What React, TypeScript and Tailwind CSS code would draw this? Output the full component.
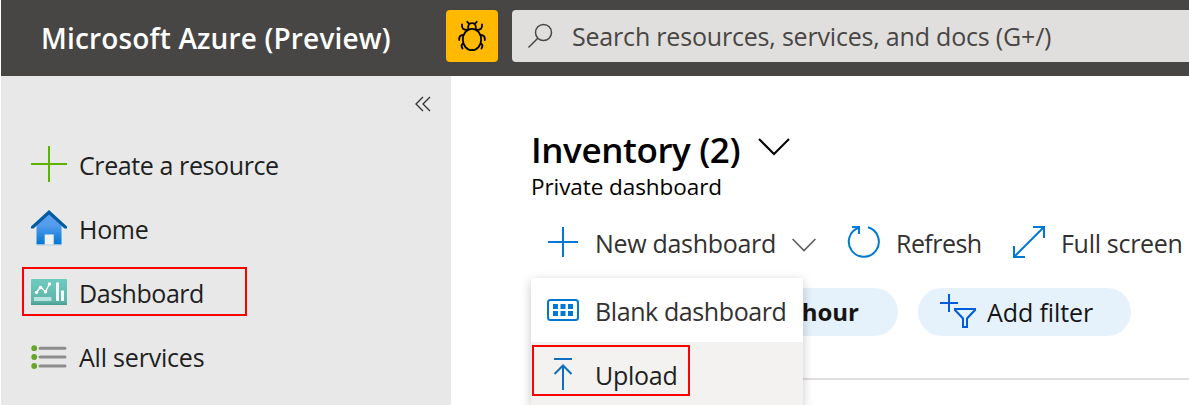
import type { ReactNode } from 'react';

function BugIcon() {
  return (
    <svg width="28" height="32" viewBox="0 0 28 32" fill="none" stroke="#000" strokeWidth="1.8" strokeLinecap="round">
      <ellipse cx="14" cy="19.500" rx="9.2" ry="10.7" />
      <path d="M10.2 9.5V6.900a3.8 3.8 0 0 1 7.6 0v2.600M11 3.700 9.2 1.8M17 3.700l1.800-1.900" />
      <path d="M4 4.500c-.3 3.500 1 5.500 5.500 5.500M24 4.500c.3 3.500-1 5.500-5.500 5.500" />
      <path d="M1.200 20c-.3-3 .8-5 4.300-5M26.800 20c.3-3-.8-5-4.300-5M5 23.500c-1.500 1-1.800 3-.5 5M23 23.500c1.500 1 1.800 3 .5 5" />
    </svg>
  );
}

function SearchIcon() {
  return (
    <svg width="26" height="26" viewBox="0 0 26 26" fill="none" stroke="#484644" strokeWidth="1.5">
      <circle cx="16.500" cy="9.500" r="8" />
      <path d="M10.800 15.200 1.500 24.500" />
    </svg>
  );
}

function HomeIcon() {
  return (
    <svg width="36" height="36" viewBox="0 0 36 36">
      <defs>
        <linearGradient id="home" x1="0" y1="0" x2="0" y2="1">
          <stop offset="0" stopColor="#5ea0ef" />
          <stop offset=".4" stopColor="#559cec" />
          <stop offset="1" stopColor="#0078d4" />
        </linearGradient>
      </defs>
      <path d="M18 2 5.500 14v20.500h25V14z" fill="url(#home)" />
      <path d="M18 0 0 16.500v2h2.500L18 4.500l15.500 14H36v-2z" fill="#005ba1" />
      <path d="M13.700 24.500h9V35h-9z" fill="#f2f2f2" />
      <path d="M5.500 35h25" stroke="#b9c9da" />
    </svg>
  );
}

function DashboardIcon() {
  return (
    <svg width="36" height="26" viewBox="0 0 36 26">
      <defs>
        <linearGradient id="dash" x1="0" y1="0" x2="0" y2="1">
          <stop offset="0" stopColor="#6ecbc0" />
          <stop offset=".85" stopColor="#5fb5a9" />
          <stop offset="1" stopColor="#4a9b90" />
        </linearGradient>
      </defs>
      <rect width="36" height="26" rx=".6" fill="url(#dash)" />
      <path d="M3 18h17.500v4H3z" fill="#b9e3de" />
      <path d="M25 3.500h3V22h-3zM30 11.500h3V22h-3z" fill="#f2fafa" />
      <path d="m5.500 13.500 4-5.500 5 4.500L18.500 5" fill="none" stroke="#fff" strokeWidth="1.400" />
      <g fill="#fff">
        <circle cx="5.500" cy="13.500" r="1.700" />
        <circle cx="9.500" cy="8.500" r="1.700" />
        <circle cx="14.500" cy="12.700" r="1.700" />
        <circle cx="18.500" cy="5" r="1.800" />
      </g>
    </svg>
  );
}

function ListIcon() {
  return (
    <svg className="mt-px" width="36" height="24" viewBox="0 0 36 24">
      <g fill="#67a52a">
        <circle cx="3.200" cy="3.200" r="2.900" />
        <circle cx="3.200" cy="12" r="2.900" />
        <circle cx="3.200" cy="21" r="2.900" />
      </g>
      <path d="M9 3.200h25M9 12h25M9 21h25" stroke="#8c8c8c" strokeWidth="3" strokeLinecap="round" />
    </svg>
  );
}

function NavItem({ icon, children }: { icon: ReactNode; children: ReactNode }) {
  return (
    <li className="flex h-16 items-center">
      <span className="flex w-9 shrink-0 justify-center">{icon}</span>
      <span className="pt-px pl-3 text-[25px] leading-8 whitespace-nowrap text-[#201f1e]">{children}</span>
    </li>
  );
}

export default function App() {
  return (
    <div className="flex h-[405px] w-[1189px] flex-col overflow-hidden bg-white pl-px font-['Open_Sans','Noto_Sans',sans-serif]">
      <header className="flex h-[76px] shrink-0 items-center bg-[#484644] pb-1">
        <h1 className="w-[445px] pt-[3px] pl-10 text-[28px] leading-9 font-semibold whitespace-nowrap text-white">
          <span className="tracking-[0.15px]">Microsoft Azure (Preview)</span>
        </h1>
        <button className="flex h-[52px] w-[52px] items-center justify-center rounded bg-[#ffb900]">
          <BugIcon />
        </button>
        <div className="ml-3.5 flex h-[52px] flex-1 items-center rounded-l bg-[#e1dfdd] pl-[15px]">
          <SearchIcon />
          <span className="pb-px pl-[19px] text-[25px] leading-8 tracking-[-0.19px] whitespace-nowrap text-[#484644]">
            Search resources, services, and docs (G+/)
          </span>
        </div>
      </header>

      <div className="flex flex-1">
        <nav className="relative w-[450px] shrink-0 bg-[#e8e8e8]">
          <div className="flex h-14 items-center justify-end pr-5">
            <svg width="16" height="16" viewBox="0 0 16 16" fill="none" stroke="#323130" strokeWidth="1.300">
              <path d="M8 1 1 8l7 7M15 1 8 8l7 7" />
            </svg>
          </div>
          <ul className="pl-[30px]">
            <NavItem
              icon={
                <svg width="36" height="36" viewBox="0 0 36 36" stroke="#5db300" strokeWidth="2">
                  <path d="M18 0v36M0 18h36" />
                </svg>
              }
            >
              <span className="tracking-[-0.4px]">Create a resource</span>
            </NavItem>
            <NavItem icon={<HomeIcon />}>
              <span className="tracking-[-0.3px]">Home</span>
            </NavItem>
            <NavItem icon={<DashboardIcon />}>
              <span className="tracking-[-0.45px]">Dashboard</span>
            </NavItem>
            <NavItem icon={<ListIcon />}>
              <span className="tracking-[-0.2px]">All services</span>
            </NavItem>
          </ul>
          <div className="absolute top-[191px] left-[21px] h-[49px] w-[225px] border-2 border-[#ff0000]" />
        </nav>

        <main className="relative flex-1 pl-20">
          <div className="flex h-[95px] items-end">
            <h2 className="mb-[-1px] w-[227px] text-[35px] leading-[44px] font-semibold tracking-[-0.4px] whitespace-nowrap text-black">
              Inventory (2)
            </h2>
            <svg className="mb-[-9px] h-[44px] w-8" viewBox="0 0 32 44" fill="none" stroke="#000" strokeWidth="2">
              <path d="m1 3 15 15L31 3" />
            </svg>
          </div>
          <p className="mt-[2px] text-[22.500px] leading-7 tracking-[-0.07px] whitespace-nowrap text-black">Private dashboard</p>

          <div className="mt-[16px] flex h-[50px] items-center text-[25px] leading-8 whitespace-nowrap text-[#323130]">
            <svg className="ml-[17px]" width="30" height="30" viewBox="0 0 30 30" stroke="#0078d4" strokeWidth="2">
              <path d="M15 0v30M0 15h30" />
            </svg>
            <span className="ml-[17px] w-[197px] pt-0.5 tracking-[-0.3px]">New dashboard</span>
            <svg className="mt-1.5" width="24" height="14" viewBox="0 0 24 14" fill="none" stroke="#605e5c" strokeWidth="1.600">
              <path d="m.6 1 11.400 11.500L23.400 1" />
            </svg>
            <svg className="ml-[31px]" width="34" height="34" viewBox="0 0 34 34" fill="none" stroke="#0078d4" strokeWidth="2">
              <path d="M21 2.300A15 15 0 1 1 12 2.500M5 2h7v7" />
            </svg>
            <span className="ml-[15px] w-[116px] pt-0.5 tracking-[-0.55px]">Refresh</span>
            <svg width="34" height="34" viewBox="0 0 34 34" fill="none" stroke="#0078d4" strokeWidth="2">
              <path d="M2 32 32 2M21 2h11v11M2 21v11h11" />
            </svg>
            <span className="ml-[15px] pt-0.5 tracking-[-0.3px]">Full screen</span>
          </div>

          <div className="mt-[21px] flex h-12 gap-5 text-[25px] leading-[48px] whitespace-nowrap text-[#161514]">
            <div className="w-[367px] rounded-full bg-[#e5f1fb] pr-[39px] text-right text-[24px] font-bold">
              hour
            </div>
            <div className="flex w-[213px] items-center rounded-full bg-[#e5f1fb] pl-[22px]">
              <svg width="36" height="36" viewBox="0 0 36 36" fill="none" stroke="#015cda" strokeWidth="2">
                <path d="M9 0v18M0 9h18" />
                <path d="M15 15h20v1l-8 8.500V33h-4v-8.500L15 16z" />
              </svg>
              <span className="pb-px pl-[11px] tracking-[-0.1px]">Add filter</span>
            </div>
          </div>
          <div className="mt-[42px] h-0.5 bg-[#e1dfdd]" />

          <div className="absolute top-[202px] left-20 w-[272px] bg-white text-[25px] leading-8 whitespace-nowrap text-[#323130] shadow-[0_3px_10px_rgba(0,0,0,0.22)]">
            <div className="flex h-16 items-center pl-4">
              <svg width="32" height="22" viewBox="0 0 32 22">
                <rect x="1" y="1" width="30" height="20" rx="2.500" fill="none" stroke="#0078d4" strokeWidth="2" />
                <path d="M6 5h5v5H6zM13.500 5h5v5h-5zM21 5h5v5h-5zM6 12h5v5H6zM13.500 12h5v5h-5zM21 12h5v5h-5z" fill="#0078d4" />
              </svg>
              <span className="pt-0.5 pl-4 tracking-[-0.4px]">Blank dashboard</span>
            </div>
            <div className="flex h-16 items-center bg-[#f3f2f1] pl-[23px] text-[#201f1e]">
              <svg width="18" height="32" viewBox="0 0 18 32" fill="none" stroke="#106ebe" strokeWidth="2">
                <path d="M0 1h18M9 32V7M.5 16 9 7.500l8.500 8.500" />
              </svg>
              <span className="pt-0.5 pl-[23px] tracking-[-0.25px]">Upload</span>
            </div>
            <div className="absolute top-[67px] left-px h-[51px] w-[158px] border-2 border-[#ff0000]" />
          </div>
        </main>
      </div>
    </div>
  );
}
